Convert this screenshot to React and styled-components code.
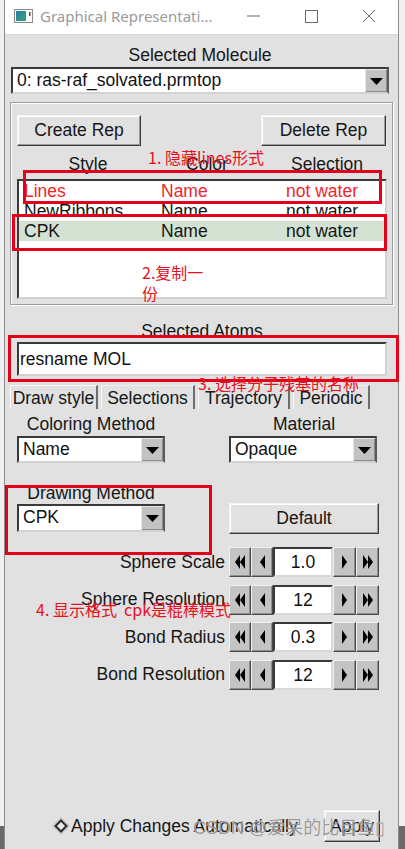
import React from 'react';
import styled, { createGlobalStyle } from 'styled-components';

const TK_FONT = `"Liberation Sans", Arial, sans-serif`;
const CJK_FONT = `"Noto Sans CJK SC", "Noto Sans", sans-serif`;

const GlobalStyle = createGlobalStyle`
  html, body {
    margin: 0;
    padding: 0;
  }
  body {
    background: #f0f0f0;
    font-family: ${TK_FONT};
  }
`;

const Page = styled.div`
  position: relative;
  width: 405px;
  height: 849px;
  overflow: hidden;
  background: linear-gradient(to bottom, #f0f0f0 826px, #6a6a6a 826px);
`;

const Window = styled.div`
  margin-left: 4px;
  width: 395px;
  height: 849px;
  box-sizing: border-box;
  border-left: 1px solid #8c8c8c;
  border-right: 1px solid #8c8c8c;
  display: flex;
  flex-direction: column;
  background: #e1e1e1;
`;

const TitleBar = styled.div`
  height: 35px;
  flex: none;
  background: #fff;
  border-bottom: 1px solid #d6d6d6;
  display: flex;
  align-items: center;
  padding-left: 9px;
  padding-bottom: 2px;
  box-sizing: border-box;
`;

const TitleText = styled.span`
  margin-left: 7px;
  font-family: "Noto Sans", sans-serif;
  font-size: 15px;
  color: #9a9a9a;
  white-space: nowrap;
`;

const WinControls = styled.div`
  margin-left: auto;
  display: flex;
`;

const WinButton = styled.div`
  width: 58px;
  height: 30px;
  display: flex;
  align-items: center;
  justify-content: center;
`;

const Main = styled.div`
  flex: 1;
  display: flex;
  flex-direction: column;
`;

const Label = styled.div`
  font-size: 17.5px;
  line-height: 20px;
  height: 20px;
  color: #161616;
  text-align: center;
  white-space: nowrap;
  margin-top: ${p => p.$top || 0}px;
  margin-left: ${p => p.$left || 0}px;
  width: ${p => (p.$width ? `${p.$width}px` : 'auto')};
`;

const Combo = styled.div`
  box-sizing: border-box;
  width: ${p => p.$width}px;
  height: ${p => p.$height || 27}px;
  margin-top: ${p => p.$top || 0}px;
  margin-left: ${p => p.$left || 0}px;
  background: #fff;
  border-style: solid;
  border-width: 2px;
  border-color: #3a3a3a #5a5a5a #d2d2d2 #3a3a3a;
  display: flex;
  align-items: stretch;
`;

const ComboText = styled.div`
  flex: 1;
  padding-left: 4px;
  font-size: 17.5px;
  line-height: 23px;
  color: #111;
  white-space: nowrap;
  overflow: hidden;
`;

const ArrowButton = styled.div`
  width: 21px;
  background: #c2c2c2;
  border-left: 1px solid #e6e6e6;
  border-top: 1px solid #e6e6e6;
  box-shadow: inset -1px -1px 0 #8a8a8a;
  display: flex;
  align-items: center;
  justify-content: center;
`;

const Frame = styled.div`
  margin: 8px 0 0 5px;
  width: 383px;
  box-sizing: border-box;
  border: 1px solid #9c9c9c;
  box-shadow: inset 1px 1px 0 #fff, 1px 1px 0 #fff;
  padding: 12px 6px 5px 6px;
`;

const ButtonRow = styled.div`
  display: flex;
  justify-content: space-between;
`;

const Button = styled.div`
  box-sizing: border-box;
  width: ${p => p.$width}px;
  height: ${p => p.$height || 31}px;
  background: #e1e1e1;
  border: 1px solid;
  border-color: #f4f4f4 #3c3c3c #3c3c3c #f4f4f4;
  box-shadow: inset -1px -1px 0 #9a9a9a, inset 1px 1px 0 #fff;
  font-size: 17.5px;
  color: #161616;
  display: flex;
  align-items: center;
  justify-content: center;
  white-space: nowrap;
`;

const HeaderRow = styled.div`
  margin-top: 8px;
  height: 20px;
  display: grid;
  grid-template-columns: 142px 96px 1fr;
  font-size: 17.5px;
  line-height: 20px;
  color: #161616;
`;

const HeaderCell = styled.div`
  text-align: ${p => (p.$pad ? 'left' : 'center')};
  padding-left: ${p => p.$pad || 0}px;
  white-space: nowrap;
`;

const ListBox = styled.div`
  margin-top: 5px;
  width: 370px;
  height: 120px;
  box-sizing: border-box;
  background: #fff;
  border-style: solid;
  border-width: 2px;
  border-color: #3a3a3a #d2d2d2 #d2d2d2 #3a3a3a;
`;

const ListRow = styled.div`
  height: 20px;
  display: grid;
  grid-template-columns: 137px 125px 1fr;
  padding-left: 5px;
  font-size: 17.5px;
  line-height: 20px;
  white-space: nowrap;
  color: ${p => (p.$hidden ? '#f2262c' : '#161616')};
  background: ${p => (p.$selected ? '#d4e2d4' : 'transparent')};
`;

const Entry = styled.div`
  margin: 1px 0 0 12px;
  width: 370px;
  height: 34px;
  box-sizing: border-box;
  background: #fff;
  border-style: solid;
  border-width: 2px;
  border-color: #3a3a3a #d2d2d2 #d2d2d2 #3a3a3a;
  padding-left: 1px;
  font-size: 17.5px;
  line-height: 30px;
  color: #111;
`;

const Tabs = styled.div`
  margin: 9px 0 0 5px;
  height: 24px;
  display: flex;
  gap: 3px;
`;

const Tab = styled.div`
  box-sizing: border-box;
  width: ${p => p.$width}px;
  height: 24px;
  border-left: 1px solid #fafafa;
  border-top: 1px solid ${p => (p.$active ? '#fafafa' : '#efefef')};
  border-right: 2px solid #6e6e6e;
  font-size: 17.5px;
  line-height: 25px;
  color: #161616;
  text-align: center;
  white-space: nowrap;
`;

const Panel = styled.div`
  padding: 5px 0 0 12px;
  display: grid;
  grid-template-columns: 148px 150px;
  column-gap: 64px;
  align-items: start;
`;

const Column = styled.div`
  display: flex;
  flex-direction: column;
  margin-top: ${p => p.$top || 0}px;
`;

const Spinners = styled.div`
  margin: 13px 0 0 12px;
  display: flex;
  flex-direction: column;
  gap: 7.5px;
`;

const SpinRow = styled.div`
  display: grid;
  grid-template-columns: 208px 150px;
  column-gap: 4px;
  height: 30px;
  align-items: center;
`;

const SpinLabel = styled.div`
  text-align: right;
  font-size: 17.5px;
  color: #161616;
  white-space: nowrap;
`;

const SpinControls = styled.div`
  display: flex;
  height: 30px;
`;

const SpinButton = styled.div`
  box-sizing: border-box;
  width: ${p => p.$width}px;
  height: 30px;
  background: #c4c4c4;
  border: 1px solid;
  border-color: #efefef #4a4a4a #4a4a4a #efefef;
  box-shadow: inset -1px -1px 0 #8e8e8e;
  display: flex;
  align-items: center;
  justify-content: center;
`;

const SpinValue = styled.div`
  box-sizing: border-box;
  width: 60px;
  height: 30px;
  background: #fff;
  border-style: solid;
  border-width: 2px;
  border-color: #3a3a3a #d8d8d8 #d8d8d8 #3a3a3a;
  font-size: 17.5px;
  line-height: 26px;
  text-align: center;
  color: #111;
`;

const BottomRow = styled.div`
  margin-top: auto;
  margin-bottom: 7px;
  height: 32px;
  display: flex;
  align-items: center;
  padding-left: 47px;
`;

const RadioLabel = styled.span`
  margin-left: 1px;
  font-size: 17.5px;
  color: #161616;
  white-space: nowrap;
`;

const ApplyButton = styled(Button)`
  margin-left: auto;
  margin-right: 18px;
`;

const RedBox = styled.div`
  position: absolute;
  box-sizing: border-box;
  border: 3px solid #e3001b;
  pointer-events: none;
`;

const Note = styled.div`
  position: absolute;
  font-family: ${CJK_FONT};
  font-size: ${p => p.$size || 16}px;
  line-height: 21px;
  color: #e8101e;
  white-space: pre;
`;

const Watermark = styled.div`
  position: absolute;
  left: 193px;
  top: 816px;
  font-family: "Liberation Sans", ${CJK_FONT};
  font-size: 18px;
  line-height: 24px;
  color: rgba(110, 110, 110, 0.7);
  text-shadow: 0 0 1px rgba(255, 255, 255, 0.9);
  white-space: nowrap;
`;

const DownArrow = () => (
  <svg width="13" height="7" viewBox="0 0 13 7">
    <polygon points="0,0 13,0 6.5,7" fill="#000" />
  </svg>
);

const Tri = ({ dir = 'left', double }) => {
  const one = dir === 'left' ? 'M5 0 L0 7 L5 14 Z' : 'M0 0 L5 7 L0 14 Z';
  const two = dir === 'left' ? 'M10 0 L5 7 L10 14 Z' : 'M5 0 L10 7 L5 14 Z';
  return (
    <svg width={double ? 10 : 5} height="14" viewBox={`0 0 ${double ? 10 : 5} 14`}>
      <path d={one} fill="#000" />
      {double && <path d={two} fill="#000" />}
    </svg>
  );
};

const Spinner = ({ label, value }) => (
  <SpinRow>
    <SpinLabel>{label}</SpinLabel>
    <SpinControls>
      <SpinButton $width={22}><Tri dir="left" double /></SpinButton>
      <SpinButton $width={22}><Tri dir="left" /></SpinButton>
      <SpinValue>{value}</SpinValue>
      <SpinButton $width={23}><Tri dir="right" /></SpinButton>
      <SpinButton $width={23}><Tri dir="right" double /></SpinButton>
    </SpinControls>
  </SpinRow>
);

const Dropdown = ({ text, width, top, left, height }) => (
  <Combo $width={width} $top={top} $left={left} $height={height}>
    <ComboText>{text}</ComboText>
    <ArrowButton><DownArrow /></ArrowButton>
  </Combo>
);

const AppIcon = () => (
  <svg width="19" height="14" viewBox="0 0 19 14">
    <defs>
      <linearGradient id="ico" x1="0" y1="0" x2="1" y2="1">
        <stop offset="0" stopColor="#2a7fb0" />
        <stop offset="1" stopColor="#3aa070" />
      </linearGradient>
    </defs>
    <rect x="0.5" y="0.5" width="18" height="13" fill="#fff" stroke="#8a8a8a" />
    <rect x="2" y="2" width="10" height="10" fill="url(#ico)" />
    <rect x="15" y="3" width="1.5" height="4" fill="#555" />
  </svg>
);

const Diamond = () => (
  <svg width="18" height="18" viewBox="0 0 18 18">
    <polygon points="9,1 17,9 9,17 1,9" fill="none" stroke="#c8c8c8" strokeWidth="1.5" />
    <polygon points="9,3.5 14.5,9 9,14.5 3.5,9" fill="#e6e6e6" stroke="#2a2a2a" strokeWidth="2" />
  </svg>
);

const reps = [
  { style: 'Lines', color: 'Name', sel: 'not water', hidden: true },
  { style: 'NewRibbons', color: 'Name', sel: 'not water' },
  { style: 'CPK', color: 'Name', sel: 'not water', selected: true },
];

const spinners = [
  ['Sphere Scale', '1.0'],
  ['Sphere Resolution', '12'],
  ['Bond Radius', '0.3'],
  ['Bond Resolution', '12'],
];

export default function App() {
  return (
    <Page>
      <GlobalStyle />
      <Window>
        <TitleBar>
          <AppIcon />
          <TitleText>Graphical Representati...</TitleText>
          <WinControls>
            <WinButton>
              <svg width="13" height="2"><rect width="13" height="1" y="0.5" fill="#6a6a6a" /></svg>
            </WinButton>
            <WinButton>
              <svg width="13" height="13"><rect x="0.5" y="0.5" width="12" height="12" fill="none" stroke="#6a6a6a" /></svg>
            </WinButton>
            <WinButton>
              <svg width="14" height="14"><path d="M1 1 L13 13 M13 1 L1 13" stroke="#6a6a6a" strokeWidth="1" /></svg>
            </WinButton>
          </WinControls>
        </TitleBar>

        <Main>
          <Label $top={10} $left={6} $width={378}>Selected Molecule</Label>
          <Dropdown text="0: ras-raf_solvated.prmtop" width={378} top={2} left={6} />

          <Frame>
            <ButtonRow>
              <Button $width={124}>Create Rep</Button>
              <Button $width={125}>Delete Rep</Button>
            </ButtonRow>
            <HeaderRow>
              <HeaderCell>Style</HeaderCell>
              <HeaderCell>Color</HeaderCell>
              <HeaderCell $pad={36}>Selection</HeaderCell>
            </HeaderRow>
            <ListBox>
              {reps.map(r => (
                <ListRow key={r.style} $hidden={r.hidden} $selected={r.selected}>
                  <span>{r.style}</span>
                  <span>{r.color}</span>
                  <span>{r.sel}</span>
                </ListRow>
              ))}
            </ListBox>
          </Frame>

          <Label $top={16} $left={12} $width={370}>Selected Atoms</Label>
          <Entry>resname MOL</Entry>

          <Tabs>
            <Tab $width={88} $active>Draw style</Tab>
            <Tab $width={94}>Selections</Tab>
            <Tab $width={92}>Trajectory</Tab>
            <Tab $width={77}>Periodic</Tab>
          </Tabs>

          <Panel>
            <Column>
              <Label>Coloring Method</Label>
              <Dropdown text="Name" width={148} top={2} />
              <Label $top={20}>Drawing Method</Label>
              <Dropdown text="CPK" width={148} top={1} height={28} />
            </Column>
            <Column>
              <Label>Material</Label>
              <Dropdown text="Opaque" width={148} top={2} />
              <Column $top={40}>
                <Button $width={150}>Default</Button>
              </Column>
            </Column>
          </Panel>

          <Spinners>
            {spinners.map(([label, value]) => (
              <Spinner key={label} label={label} value={value} />
            ))}
          </Spinners>

          <BottomRow>
            <Diamond />
            <RadioLabel>Apply Changes Automatically</RadioLabel>
            <ApplyButton $width={56} $height={32}>Apply</ApplyButton>
          </BottomRow>
        </Main>
      </Window>

      <RedBox style={{ left: 23, top: 170, width: 359, height: 34 }} />
      <RedBox style={{ left: 12, top: 214, width: 375, height: 37 }} />
      <RedBox style={{ left: 8, top: 335, width: 391, height: 47 }} />
      <RedBox style={{ left: 5, top: 485, width: 207, height: 70 }} />

      <Note style={{ left: 148, top: 147 }}>1. 隐藏lines形式</Note>
      <Note style={{ left: 142, top: 262 }}>{'2.复制一\n份'}</Note>
      <Note style={{ left: 198, top: 373 }}>3. 选择分子残基的名称</Note>
      <Note style={{ left: 36, top: 599 }}>4. 显示格式  cpk是棍棒模式</Note>

      <Watermark>CSDN @爱呆的比目鱼▯</Watermark>
    </Page>
  );
}
